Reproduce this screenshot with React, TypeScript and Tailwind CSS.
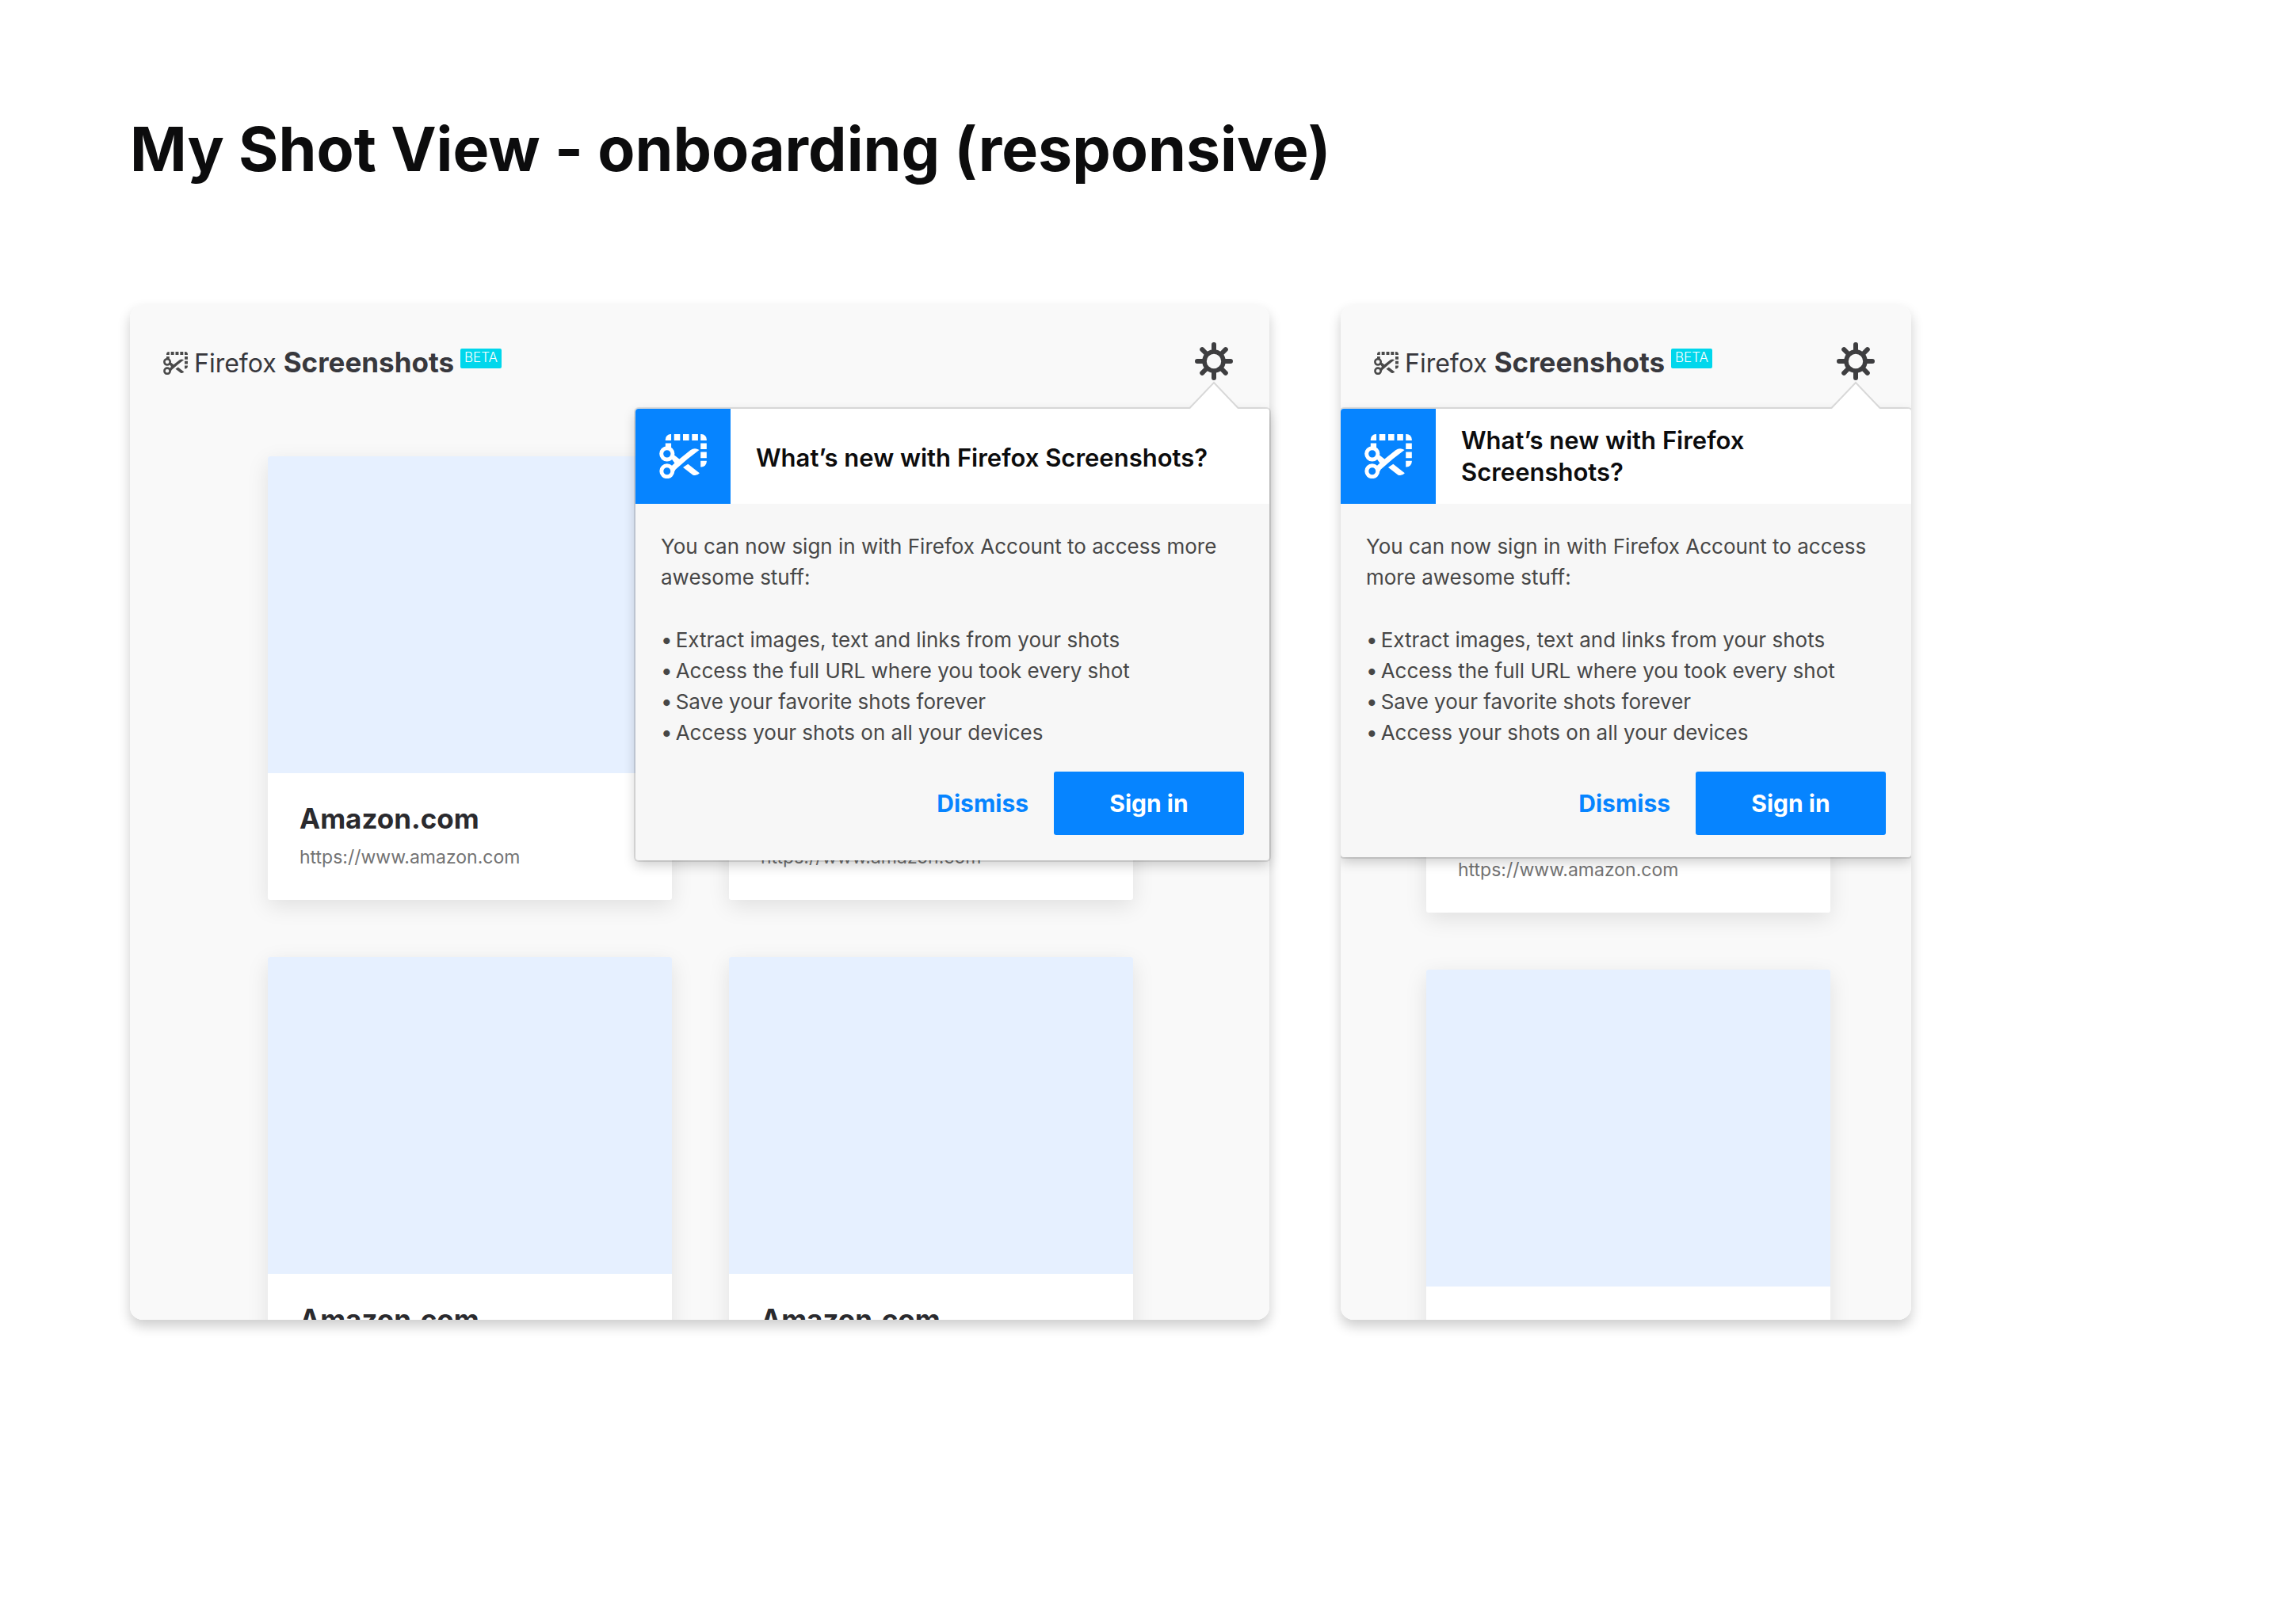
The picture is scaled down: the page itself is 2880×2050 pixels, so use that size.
import clsx from "clsx";

const PERKS = [
  "Extract images, text and links from your shots",
  "Access the full URL where you took every shot",
  "Save your favorite shots forever",
  "Access your shots on all your devices",
];

function ScissorsIcon({ className }: { className: string }) {
  return (
    <svg viewBox="0 0 180 169" fill="currentColor" className={className} aria-hidden="true">
      <path d="M23 24V20A20 20 0 0 1 43 0H45V24Z" />
      <path d="M56 0H79V24H56ZM90 0H113V24H90ZM124 0H147V24H124Z" />
      <path d="M157 0H160A20 20 0 0 1 180 20V24H157Z" />
      <path d="M157 35H180V57H157ZM157 68H180V91H157Z" />
      <path d="M157 102H180V105A20 20 0 0 1 160 125H157Z" />
      <path d="M23 35H45V56H23Z" />
      <circle cx="29" cy="75" r="21.5" fill="none" stroke="currentColor" strokeWidth="15" />
      <circle cx="29" cy="141" r="21" fill="none" stroke="currentColor" strokeWidth="15" />
      <path d="M45 92L56 79L76 95L118 61Q134 50 152 60L107 95L62 134L54 148L44 124L58 110Z" />
      <path d="M90 127L109 114L153 149Q144 160 128 156Z" />
    </svg>
  );
}

function GearIcon() {
  return (
    <svg
      viewBox="0 0 48 48"
      fill="none"
      stroke="currentColor"
      className="size-12 text-[#3e3e40]"
      aria-hidden="true"
    >
      <circle cx="24" cy="24" r="12" strokeWidth="5.6" />
      <path
        strokeWidth="6"
        strokeLinecap="round"
        d="M24 3V10M24 38V45M3 24H10M38 24H45M9.2 9.2L14 14M34 34L38.8 38.8M38.8 9.2L34 14M14 34L9.2 38.8"
      />
    </svg>
  );
}

function AppHeader() {
  return (
    <header className="flex h-[142px] items-center justify-between pr-[46px] pl-[42px]">
      <div className="flex items-center pt-1 text-[#38383d]">
        <ScissorsIcon className="h-[29px] w-[31px] text-[#4a4a4a]" />
        <p className="ml-2 text-[32px] leading-10 whitespace-nowrap">
          Firefox <span className="text-[35px] font-bold">Screenshots</span>
        </p>
        <span className="mb-3 ml-2 flex h-[25px] items-center rounded-xs bg-[#00d7ec] px-[5px] text-[17px] font-light text-white">
          BETA
        </span>
      </div>
      <button type="button" aria-label="Settings" className="cursor-pointer">
        <GearIcon />
      </button>
    </header>
  );
}

function ShotCard() {
  return (
    <article className="rounded-[3px] bg-white shadow-[0_8px_28px_rgba(0,0,0,0.1)]">
      <div className="h-[400px] rounded-t-[3px] bg-[#e6f0ff]" />
      <div className="h-40 px-10 pt-[35px]">
        <h2 className="text-[35px] leading-[44px] font-bold text-[#2a2a2e]">Amazon.com</h2>
        <a href="#shot" className="mt-[11px] block text-[23px] leading-8 text-[#737373]">
          https://www.amazon.com
        </a>
      </div>
    </article>
  );
}

function WhatsNew({ compact = false }: { compact?: boolean }) {
  return (
    <section
      role="dialog"
      aria-label="What’s new"
      className={clsx(
        "absolute top-[131px] right-0 rounded bg-[#f7f7f7] shadow-[0_0_0_2px_rgba(0,0,0,0.1),0_6px_16px_rgba(0,0,0,0.2)]",
        compact ? "w-full" : "w-[800px]",
      )}
    >
      <svg viewBox="0 0 64 38" className="absolute right-[38px] bottom-full -mb-0.5 h-[38px] w-16" aria-hidden="true">
        <path d="M1 38V36L32 3L63 36V38Z" fill="#fff" />
        <path d="M1 35.5L32 3L63 35.5" fill="none" stroke="#d8d8d8" strokeWidth="2" />
      </svg>
      <div className="flex h-30 items-center overflow-hidden rounded-t bg-white">
        <div className="flex size-30 shrink-0 items-center justify-center bg-[#0684ff] text-white">
          <ScissorsIcon className="h-14 w-15" />
        </div>
        <h2
          className={clsx("px-8 text-[31px] leading-10 font-semibold text-[#0c0c0d]", !compact && "pt-1")}
        >
          What’s new with Firefox Screenshots?
        </h2>
      </div>
      <div className={clsx("px-8 pt-[34px] text-[26px] leading-[39px] text-[#474747]", compact ? "pb-7" : "pb-8")}>
        <p className="mb-10">You can now sign in with Firefox Account to access more awesome stuff:</p>
        <ul>
          {PERKS.map((perk) => (
            <li key={perk} className="flex gap-1">
              <span>•</span>
              {perk}
            </li>
          ))}
        </ul>
        <div className="mt-[30px] flex items-center justify-end gap-8 text-[30px] font-bold">
          <button type="button" className="cursor-pointer text-[#0684ff]">
            Dismiss
          </button>
          <button type="button" className="h-20 w-60 cursor-pointer rounded-[3px] bg-[#0684ff] text-white">
            Sign in
          </button>
        </div>
      </div>
    </section>
  );
}

export default function App() {
  return (
    <main className="min-h-screen bg-white px-[164px] pt-[132px] font-['Inter',sans-serif]">
      <h1 className="text-[77px] leading-[112px] font-bold text-[#0c0c0d]">
        My Shot View - onboarding (responsive)
      </h1>
      <div className="mt-[141px] flex items-start gap-[90px]">
        <div className="relative max-w-[1438px] flex-2 rounded-2xl shadow-[0_8px_16px_rgba(0,0,0,0.2)]">
          <div className="h-[1281px] overflow-hidden rounded-2xl bg-[#f9f9f9]">
            <AppHeader />
            <div className="mt-[49px] grid grid-cols-2 gap-[72px] pr-[172px] pl-[174px]">
              <ShotCard />
              <ShotCard />
              <ShotCard />
              <ShotCard />
            </div>
          </div>
          <WhatsNew />
        </div>
        <div className="max-w-[720px] flex-1 rounded-2xl shadow-[0_8px_16px_rgba(0,0,0,0.2)]">
          <div className="relative h-[1281px] overflow-hidden rounded-2xl bg-[#f9f9f9]">
            <AppHeader />
            <div className="mt-[65px] grid gap-[72px] pr-[102px] pl-[108px]">
              <ShotCard />
              <ShotCard />
            </div>
            <WhatsNew compact />
          </div>
        </div>
      </div>
    </main>
  );
}
